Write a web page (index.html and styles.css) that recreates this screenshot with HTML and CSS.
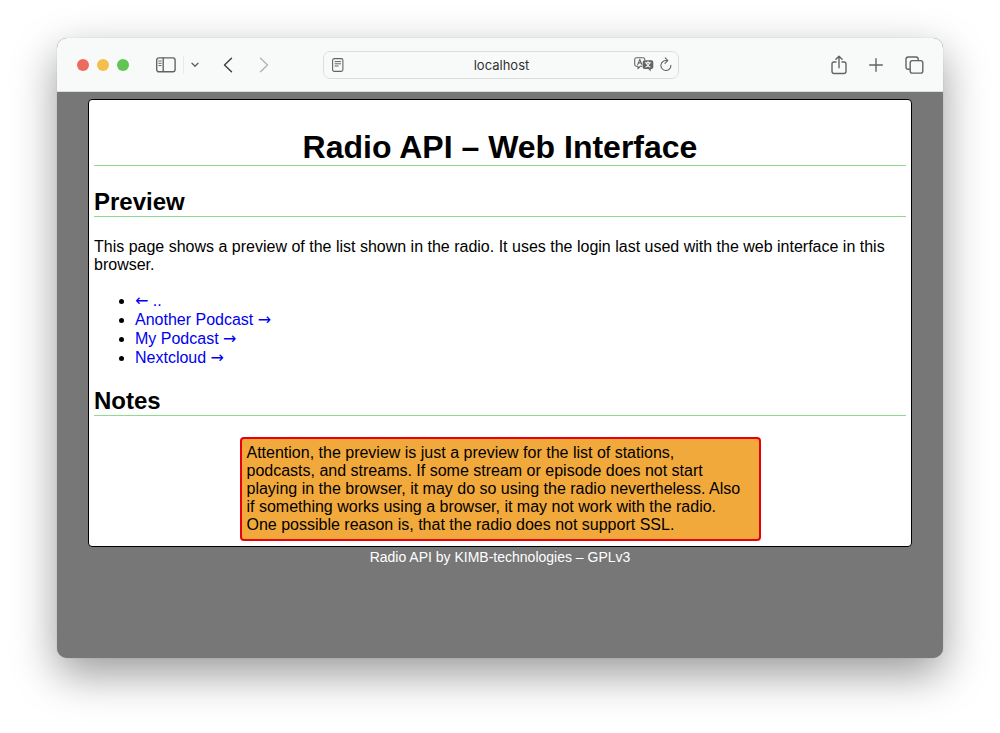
FILE: index.html
```html
<!DOCTYPE html>
<html lang="en">
<head>
<meta charset="utf-8">
<title>Radio API – Web Interface</title>
<link rel="stylesheet" href="styles.css">
</head>
<body>
<div class="window">
  <header class="toolbar">
    <div class="side">
      <div class="lights">
        <button class="light close" aria-label="Close"></button>
        <button class="light minimize" aria-label="Minimize"></button>
        <button class="light maximize" aria-label="Maximize"></button>
      </div>
      <div class="sidebar-group">
        <button class="tool" aria-label="Sidebar">
          <svg width="20" height="16" viewBox="0 0 20 16"><rect x=".7" y=".9" width="18.4" height="13.9" rx="2.2"/><path d="M7.2 1v13.6"/><path class="thin" d="M2.8 4h2.4M2.8 6.3h2.4M2.8 8.6h2.4"/></svg>
        </button>
        <span class="divider"></span>
        <button class="tool" aria-label="Tab groups">
          <svg width="8" height="6" viewBox="0 0 8 6"><path d="M1 1.2l3 3 3-3"/></svg>
        </button>
      </div>
      <div class="history">
        <button class="tool dark" aria-label="Back">
          <svg width="10" height="16" viewBox="0 0 10 16"><path d="M8.500 1.200L1.500 8l7 6.800"/></svg>
        </button>
        <button class="tool faded" aria-label="Forward">
          <svg width="10" height="16" viewBox="0 0 10 16"><path d="M1.500 1.200L8.500 8l-7 6.800"/></svg>
        </button>
      </div>
    </div>
    <div class="address">
      <button class="tool" aria-label="Reader">
        <svg class="fine" width="12" height="14" viewBox="0 0 12 14"><rect x=".6" y=".6" width="10.300" height="12.800" rx="1.600"/><path class="thin" d="M3 3.600h5.600M3 5.800h5.600M3 8h3.200"/></svg>
      </button>
      <input class="url" type="text" value="localhost" aria-label="Address">
      <button class="tool" aria-label="Translate">
        <svg class="fine" width="20" height="15" viewBox="0 0 20 15"><path d="M8 9.300H6.200L4 11.700V9.300H2.600Q.7 9.300.7 7.500V2.600Q.7.700 2.600.700h6.300Q10.800.700 10.800 2.600"/><path d="M3.700 7.600L5.800 2.400l2.100 5.200M4.400 5.900h2.800"/><path class="solid" d="M10.500 3.300h7q1.800 0 1.800 1.800v5.100q0 1.800-1.800 1.800h-.8v2.400L14.300 12h-3.800q-1.800 0-1.800-1.800V5.100q0-1.800 1.800-1.800z"/><path class="knockout" d="M11.300 5.700h5.400M14 4.500v1.200M12 10q3-1.300 3.700-4.100M12.300 6q1 2.900 3.700 4"/></svg>
      </button>
      <button class="tool" aria-label="Reload">
        <svg class="fine" width="12" height="15" viewBox="0 0 12 15"><path d="M10.900 8.300A5 5 0 1 1 7.400 3.700"/><path d="M5.200.8l2.600 2.900-2.800 2.600"/></svg>
      </button>
    </div>
    <div class="side actions">
      <button class="tool" aria-label="Share">
        <svg width="16" height="20" viewBox="0 0 16 20"><path d="M5 7H3Q1 7 1 9v7.300q0 2.200 2.200 2.200h9.600q2.200 0 2.200-2.200V9q0-2-2-2h-2M8 12.700V1.300M4.900 4.300L8 1.200l3.100 3.100"/></svg>
      </button>
      <button class="tool" aria-label="New tab">
        <svg width="14" height="14" viewBox="0 0 14 14"><path d="M7 .7v12.600M.7 7h12.600"/></svg>
      </button>
      <button class="tool" aria-label="Tab overview">
        <svg width="19" height="18" viewBox="0 0 19 18"><path d="M4.800 13.200H3.200Q1 13.200 1 11V3.200Q1 1 3.200 1H11q2.200 0 2.200 2.200v1.300"/><rect x="5.200" y="4.600" width="12.600" height="12.500" rx="2.200"/></svg>
      </button>
    </div>
  </header>
  <div class="page">
    <main class="card">
      <h1 class="title">Radio API – Web Interface</h1>
      <h2 class="heading">Preview</h2>
      <p class="text">This page shows a preview of the list shown in the radio. It uses the login last used with the web interface in this browser.</p>
      <ul class="list">
        <li><a href="#"><span class="arrow">←</span> ..</a></li>
        <li><a href="#">Another Podcast <span class="arrow">→</span></a></li>
        <li><a href="#">My Podcast <span class="arrow">→</span></a></li>
        <li><a href="#">Nextcloud <span class="arrow">→</span></a></li>
      </ul>
      <h2 class="heading">Notes</h2>
      <div class="notice">Attention, the preview is just a preview for the list of stations, podcasts, and streams. If some stream or episode does not start playing in the browser, it may do so using the radio nevertheless. Also if something works using a browser, it may not work with the radio. One possible reason is, that the radio does not support SSL.</div>
    </main>
    <footer class="footer">Radio API by KIMB-technologies – GPLv3</footer>
  </div>
</div>
</body>
</html>
```
FILE: styles.css
```css
* { box-sizing: border-box; }
body {
  margin: 0;
  min-height: 100vh;
  padding: 38px 57px 75px;
  display: flex;
  background: #fff;
  color: #000;
  font: 16px/18px "Liberation Sans", Arial, sans-serif;
}
.window {
  flex: 1;
  min-width: 0;
  display: flex;
  flex-direction: column;
  overflow: hidden;
  border-radius: 10px;
  background: #777;
  box-shadow: 0 0 1px rgba(0, 0, 0, .3), 0 16px 44px rgba(0, 0, 0, .4);
}
.toolbar {
  height: 54px;
  flex: none;
  display: flex;
  align-items: center;
  padding: 0 19px 0 20px;
  background: #f8faf9;
  border-bottom: 1px solid #dcdedd;
}
.side { flex: 1; display: flex; align-items: center; }
.actions { justify-content: flex-end; gap: 22px; }
.lights { display: flex; gap: 8px; }
.light { width: 12px; height: 12px; padding: 0; border: 0; border-radius: 50%; }
.close { background: #ed6a5f; }
.minimize { background: #f5bf4f; }
.maximize { background: #61c455; }
.sidebar-group { display: flex; align-items: center; gap: 7px; margin-left: 27px; }
.divider { width: 1px; height: 18px; background: #e9ebea; }
.history { display: flex; gap: 26px; margin-left: 24px; }
.tool { display: flex; padding: 0; border: 0; background: none; color: #626463; }
.dark { color: #3c3e3d; }
.faded { color: #b2b4b3; }
.tool svg {
  fill: none;
  stroke: currentColor;
  stroke-width: 1.4;
  stroke-linecap: round;
  stroke-linejoin: round;
}
.tool svg.fine { stroke-width: 1.1; }
.tool .thin { stroke-width: 1; }
.tool .solid { fill: currentColor; stroke: none; }
.tool .knockout { stroke: #f8faf9; }
.address {
  flex: 0 1 356px;
  height: 28px;
  display: flex;
  align-items: center;
  gap: 6px;
  padding: 0 6px 0 8px;
  border: 1px solid #dcdedd;
  border-radius: 7px;
}
.url {
  flex: 1;
  min-width: 0;
  padding: 0 0 0 26px;
  border: 0;
  background: none;
  color: #303231;
  font: 13px/16px Inter, sans-serif;
  text-align: center;
}
.page { flex: 1; padding: 7px 31px 8px; }
.card {
  padding: 5px;
  border: 1px solid #000;
  border-radius: 4px;
  background: #fff;
  display: flow-root;
}
.title, .heading { border-bottom: 1px solid #8edb90; }
.title { margin: 24px 0 22px; font-size: 32px; line-height: 36px; text-align: center; }
.heading { margin: 20px 0 21px; font-size: 24px; line-height: 28px; }
.text { margin: 21px 0 17px; }
.list { margin: 17px 0; padding-left: 41px; line-height: 19px; }
.list a { color: #00e; text-decoration: none; }
.arrow { font-family: "DejaVu Sans", sans-serif; line-height: 1; }
.notice {
  max-width: 521px;
  margin: 0 auto;
  padding: 5px 14px 5px 5px;
  border: 2px solid #e8000d;
  border-radius: 4px;
  background: #f2a93b;
}
.footer { color: #fff; font-size: 14px; line-height: 20px; text-align: center; }
```
